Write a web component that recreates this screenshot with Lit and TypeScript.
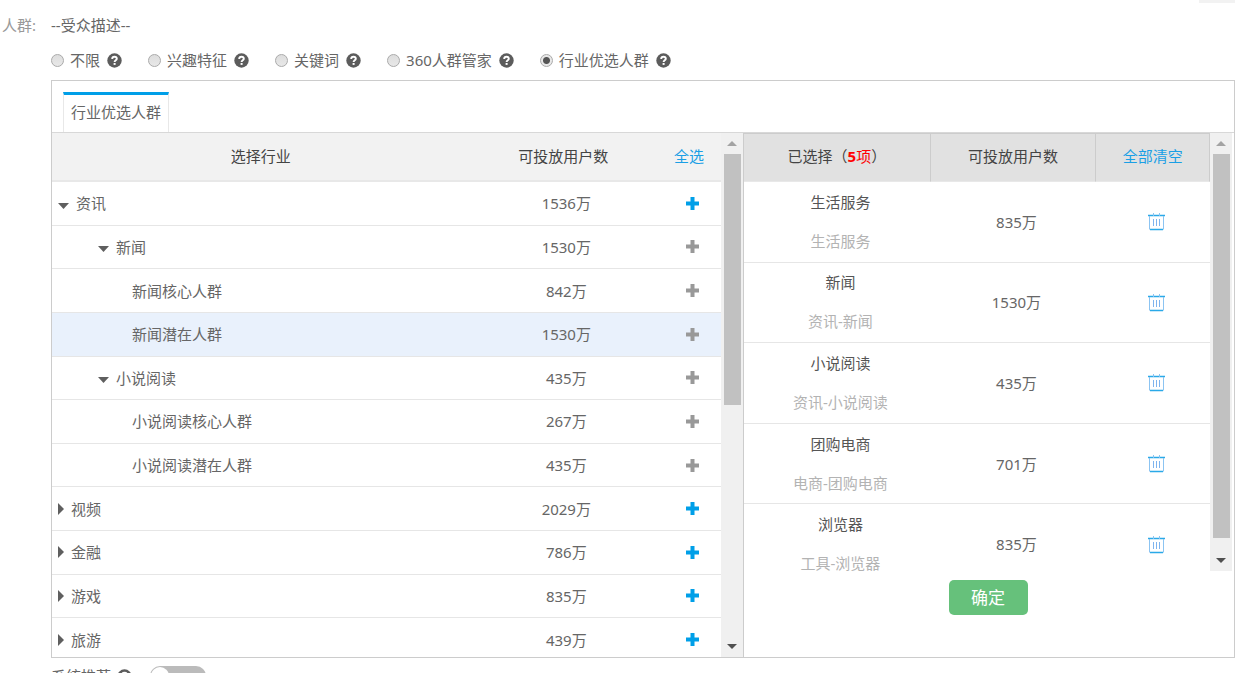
import { LitElement, html, css, svg, nothing } from "lit";
import { customElement, property } from "lit/decorators.js";
import { classMap } from "lit/directives/class-map.js";

type Industry = {
  name: string;
  count: string;
  level: 0 | 1 | 2;
  state: "open" | "closed" | "leaf";
  addable?: boolean;
  active?: boolean;
};

const INDUSTRIES: Industry[] = [
  { name: "资讯", count: "1536万", level: 0, state: "open", addable: true },
  { name: "新闻", count: "1530万", level: 1, state: "open" },
  { name: "新闻核心人群", count: "842万", level: 2, state: "leaf" },
  { name: "新闻潜在人群", count: "1530万", level: 2, state: "leaf", active: true },
  { name: "小说阅读", count: "435万", level: 1, state: "open" },
  { name: "小说阅读核心人群", count: "267万", level: 2, state: "leaf" },
  { name: "小说阅读潜在人群", count: "435万", level: 2, state: "leaf" },
  { name: "视频", count: "2029万", level: 0, state: "closed", addable: true },
  { name: "金融", count: "786万", level: 0, state: "closed", addable: true },
  { name: "游戏", count: "835万", level: 0, state: "closed", addable: true },
  { name: "旅游", count: "439万", level: 0, state: "closed", addable: true },
];

const SELECTED = [
  { name: "生活服务", path: "生活服务", count: "835万" },
  { name: "新闻", path: "资讯-新闻", count: "1530万" },
  { name: "小说阅读", path: "资讯-小说阅读", count: "435万" },
  { name: "团购电商", path: "电商-团购电商", count: "701万" },
  { name: "浏览器", path: "工具-浏览器", count: "835万" },
];

const MODES = ["不限", "兴趣特征", "关键词", "360人群管家", "行业优选人群"];

const reset = css`
  * {
    box-sizing: border-box;
  }
  button {
    font: inherit;
    color: inherit;
    background: none;
    border: 0;
    padding: 0;
    cursor: pointer;
  }
  svg {
    display: block;
  }
  a {
    color: #1a9fe5;
    text-decoration: none;
  }
  table {
    width: 100%;
    border-collapse: separate;
    border-spacing: 0;
    table-layout: fixed;
  }
  th {
    height: 49px;
    padding: 0 0 2px;
    font-weight: 400;
    color: #444;
    text-align: center;
  }
  td {
    padding: 0 0 0 6px;
    border-bottom: 1px solid #e6e6e6;
    text-align: center;
  }
`;

@customElement("help-icon")
export class HelpIcon extends LitElement {
  static styles = css`
    :host {
      display: block;
      width: 15px;
      height: 15px;
    }
    svg {
      display: block;
    }
  `;

  render() {
    return html`<svg width="15" height="15" viewBox="0 0 15 15" aria-hidden="true">
      ${svg`<circle cx="7.5" cy="7.5" r="7.2" fill="#5c5c5c"></circle>
      <path d="M5.2 5.9C5.2 4.4 6.1 3.7 7.5 3.7S9.8 4.5 9.8 5.7C9.8 7.2 7.6 7.2 7.6 9" fill="none" stroke="#fff" stroke-width="1.9"></path>
      <rect x="6.6" y="10" width="2" height="1.9" fill="#fff"></rect>`}
    </svg>`;
  }
}

@customElement("scroll-rail")
export class ScrollRail extends LitElement {
  @property({ type: Number }) size = 50;

  static styles = css`
    :host {
      display: flex;
      flex-direction: column;
      align-items: center;
      flex: none;
      width: 22px;
      background: #f0f0f0;
    }
    .arrow {
      display: flex;
      align-items: center;
      justify-content: center;
      flex: none;
      height: 21px;
    }
    .track {
      flex: 1;
      width: 17px;
    }
    .thumb {
      background: #c1c1c1;
    }
  `;

  render() {
    return html`
      <div class="arrow">
        <svg width="10" height="5"><path d="M0 5L5 0L10 5Z" fill="#a3a3a3"></path></svg>
      </div>
      <div class="track"><div class="thumb" style="height:${this.size}%"></div></div>
      <div class="arrow">
        <svg width="10" height="5"><path d="M0 0L5 5L10 0Z" fill="#505050"></path></svg>
      </div>
    `;
  }
}

@customElement("industry-table")
export class IndustryTable extends LitElement {
  static styles = [
    reset,
    css`
      :host {
        display: block;
      }
      table {
        height: 529px;
      }
      .col-name {
        width: 62.4%;
      }
      .col-add {
        width: 9.6%;
      }
      th {
        background: #f2f2f2;
        border-bottom: 2px solid #e8e8e8;
      }
      .active td {
        background: #e9f1fc;
      }
      .name {
        display: flex;
        align-items: center;
        gap: 7px;
      }
      .level-1 {
        padding-left: 40px;
      }
      .level-2 {
        padding-left: 74px;
      }
      .add {
        display: block;
        margin: 0 auto;
        color: #999;
      }
      .add.on {
        color: #009fe8;
      }
    `,
  ];

  private caret(state: Industry["state"]) {
    if (state === "leaf") return nothing;
    return html`<button aria-label=${state === "open" ? "收起" : "展开"}>
      ${state === "open"
        ? html`<svg width="11" height="11"><path d="M0 5H11L5.5 11Z" fill="#5f5f5f"></path></svg>`
        : html`<svg width="6" height="12"><path d="M0 0L6 6L0 12Z" fill="#5f5f5f"></path></svg>`}
    </button>`;
  }

  render() {
    return html`<table>
      <colgroup>
        <col class="col-name" />
        <col />
        <col class="col-add" />
      </colgroup>
      <thead>
        <tr>
          <th>选择行业</th>
          <th>可投放用户数</th>
          <th><a href="#all">全选</a></th>
        </tr>
      </thead>
      <tbody>
        ${INDUSTRIES.map(
          (row) => html`<tr class=${classMap({ active: !!row.active })}>
            <td>
              <div class="name level-${row.level}">${this.caret(row.state)}<span>${row.name}</span></div>
            </td>
            <td>${row.count}</td>
            <td>
              <button class=${classMap({ add: true, on: !!row.addable })} aria-label="添加${row.name}">
                <svg width="13" height="13"><path d="M6.5 0V13M0 6.5H13" stroke="currentColor" stroke-width="4"></path></svg>
              </button>
            </td>
          </tr>`
        )}
      </tbody>
    </table>`;
  }
}

@customElement("selected-table")
export class SelectedTable extends LitElement {
  static styles = [
    reset,
    css`
      :host {
        display: block;
      }
      table {
        height: 452px;
      }
      .col-name {
        width: 40%;
      }
      .col-clear {
        width: 24.4%;
      }
      th {
        background: #e1e1e1;
        border-right: 1px solid #ccc;
        border-top: 1px solid #ccc;
        border-bottom: 1px solid #e8e8e8;
        padding-bottom: 4px;
      }
      .total {
        color: #f00;
      }
      .name,
      .path {
        line-height: 39px;
      }
      .name {
        color: #555;
      }
      .path {
        color: #b3b3b3;
      }
      .trash {
        display: block;
        margin: 0 auto;
      }
    `,
  ];

  render() {
    return html`<table>
      <colgroup>
        <col class="col-name" />
        <col />
        <col class="col-clear" />
      </colgroup>
      <thead>
        <tr>
          <th>已选择（<span class="total"><b>5</b>项</span>）</th>
          <th>可投放用户数</th>
          <th><a href="#clear">全部清空</a></th>
        </tr>
      </thead>
      <tbody>
        ${SELECTED.map(
          (row) => html`<tr>
            <td>
              <div class="name">${row.name}</div>
              <div class="path">${row.path}</div>
            </td>
            <td>${row.count}</td>
            <td>
              <button class="trash" aria-label="删除${row.name}">
                <svg width="17" height="19" fill="none">
                  <path d="M0 3.5H17M2 17.5H15" stroke="#2aa9e8" stroke-width="1.4"></path>
                  <path d="M1.5 4V17.5M15.5 4V17.5M5.5 1V4M11.5 1V4" stroke="#8cc4f2"></path>
                  <path d="M5.5 7V14M8.5 7V14M11.5 7V14" stroke="#7fb4ee"></path>
                </svg>
              </button>
            </td>
          </tr>`
        )}
      </tbody>
    </table>`;
  }
}

@customElement("app-root")
export class AppRoot extends LitElement {
  static styles = [
    reset,
    css`
      :host {
        display: block;
        height: 100vh;
        overflow: hidden;
        background: #fff;
        color: #666;
        font: 15px/20px "Noto Sans", "Noto Sans CJK SC", sans-serif;
      }
      .edge {
        display: flex;
        justify-content: flex-end;
        height: 15px;
        padding-right: 8px;
      }
      .edge-chip {
        width: 36px;
        height: 3px;
        background: #f2f2f2;
      }
      .field {
        display: grid;
        grid-template-columns: 49px minmax(0, 1fr);
        padding: 0 8px 0 2px;
      }
      .caption {
        color: #999;
      }
      .modes {
        display: flex;
        gap: 26px;
        padding: 15px 0 10px;
      }
      .mode {
        display: flex;
        align-items: center;
        gap: 7px;
      }
      .mode label {
        display: flex;
        align-items: center;
        gap: 6px;
      }
      .mode input {
        appearance: none;
        width: 13px;
        height: 13px;
        margin: 0;
        border: 1px solid #aaa;
        border-radius: 50%;
        background: linear-gradient(#ddd, #e8e8e8);
      }
      .mode input:checked {
        background: radial-gradient(circle, #555 0 3px, #e8e8e8 4px);
      }
      .picker {
        border: 1px solid #ccc;
      }
      .tabs {
        display: flex;
        height: 52px;
        padding: 11px 11px 0;
        border-bottom: 1px solid #d8d8d8;
      }
      .tab {
        padding: 0 7px 4px;
        border: 1px solid #e8e8e8;
        border-top: 3px solid #009fe8;
        border-bottom: 0;
      }
      .panes {
        display: flex;
        height: 524px;
      }
      .left {
        display: flex;
        flex: 693 1 0;
        min-width: 0;
        overflow: hidden;
        border-right: 1px solid #ccc;
      }
      .right {
        display: flex;
        flex-direction: column;
        align-items: center;
        flex: 489 1 0;
        min-width: 0;
        gap: 9px;
        padding-right: 2px;
      }
      .scroller {
        display: flex;
        width: 100%;
        height: 438px;
        overflow: hidden;
      }
      industry-table,
      selected-table {
        flex: 1;
        min-width: 0;
      }
      .confirm {
        width: 79px;
        height: 35px;
        border-radius: 5px;
        background: #66c17b;
        color: #fff;
        font-size: 17px;
      }
      .recommend {
        display: flex;
        align-items: center;
        gap: 6px;
        padding-top: 8px;
      }
      .toggle {
        appearance: none;
        display: flex;
        width: 56px;
        height: 20px;
        margin: 0 0 0 2px;
        padding: 1px;
        border-radius: 10px;
        background: #bbb;
      }
      .toggle::before {
        content: "";
        width: 18px;
        height: 18px;
        border-radius: 50%;
        background: #fff;
      }
    `,
  ];

  render() {
    return html`
      <div class="edge"><div class="edge-chip"></div></div>
      <div class="field">
        <div class="caption">人群:</div>
        <div>
          <div>--受众描述--</div>
          <div class="modes" role="radiogroup" aria-label="人群">
            ${MODES.map(
              (mode, i) => html`<div class="mode">
                <label><input type="radio" name="mode" ?checked=${i === 4} />${mode}</label>
                <help-icon></help-icon>
              </div>`
            )}
          </div>
          <div class="picker">
            <div class="tabs"><button class="tab">行业优选人群</button></div>
            <div class="panes">
              <div class="left">
                <industry-table></industry-table>
                <scroll-rail size="52"></scroll-rail>
              </div>
              <div class="right">
                <div class="scroller">
                  <selected-table></selected-table>
                  <scroll-rail size="97"></scroll-rail>
                </div>
                <button class="confirm">确定</button>
              </div>
            </div>
          </div>
          <div class="recommend">
            <label for="recommend">系统推荐</label>
            <help-icon></help-icon>
            <span>:</span>
            <input id="recommend" class="toggle" type="checkbox" role="switch" />
          </div>
        </div>
      </div>
    `;
  }
}
